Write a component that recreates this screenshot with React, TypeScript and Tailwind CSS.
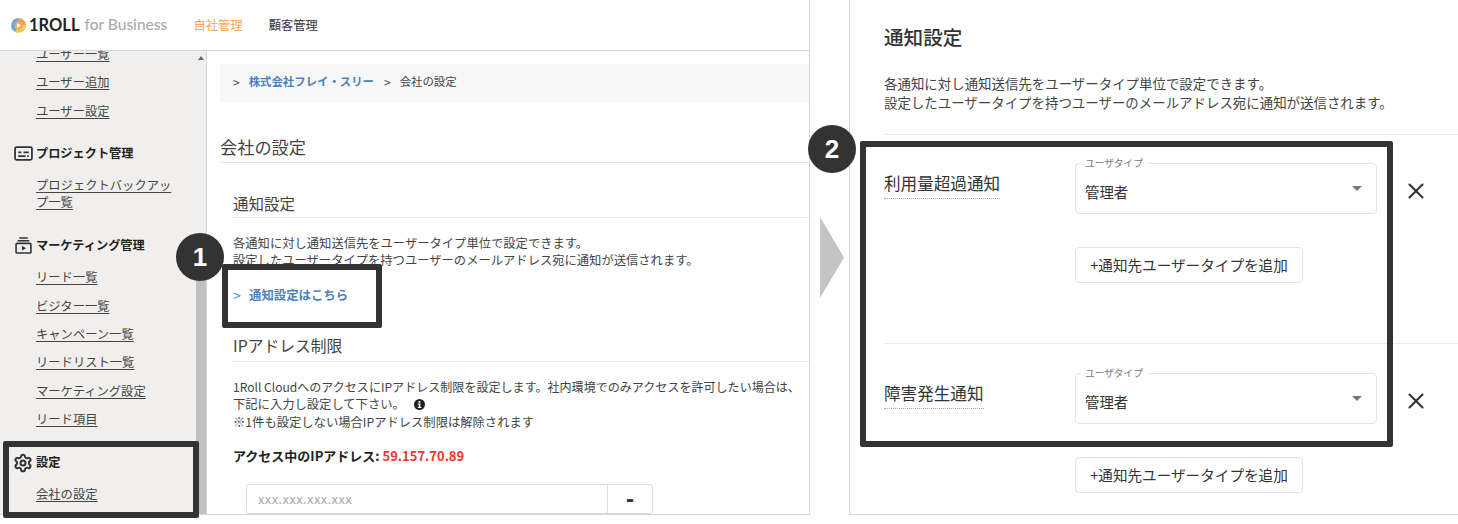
import { Settings, X } from "lucide-react";

const FONT = "font-['Noto_Sans_CJK_JP','Noto_Sans',sans-serif]";

function SideLink({ children }: { children: React.ReactNode }) {
  return (
    <div className="flex h-[28.4px] items-center pl-[36px] text-[12.3px] text-[#444]">
      <span className="underline underline-offset-[2px]">{children}</span>
    </div>
  );
}

function SideHead({ icon, label, className }: { icon: React.ReactNode; label: string; className: string }) {
  return (
    <div className={`flex h-[28px] items-center text-[12.2px] font-bold text-[#222] ${className}`}>
      <span className="flex w-[36px] justify-center pl-[10px]">{icon}</span>
      <span>{label}</span>
    </div>
  );
}

function ProjectIcon() {
  return (
    <svg width="19" height="15" viewBox="0 0 18 14" fill="none" stroke="#333" strokeWidth="1.7">
      <rect x="1" y="1" width="16" height="12" rx="1.5" />
      <path d="M4 6h3M9 6h5M4 9.5h7M12.5 9.5h1.5" />
    </svg>
  );
}

function MarketingIcon() {
  return (
    <svg width="17" height="17" viewBox="0 0 16 16" fill="none" stroke="#333" strokeWidth="1.5">
      <path d="M4 1h8M2.5 3.5h11" />
      <rect x="1" y="6" width="14" height="9" rx="1" />
      <path d="M6.5 8.2v4.6l4-2.3z" fill="#333" stroke="none" />
    </svg>
  );
}

function Logo() {
  return (
    <svg width="15" height="15" viewBox="0 0 30 30">
      <path d="M15 0A15 15 0 0 1 30 15H22A7 7 0 0 0 15 8z" fill="#f0a04b" />
      <path d="M30 15A15 15 0 0 1 8 28L12 21A7 7 0 0 0 22 15z" fill="#ecc85e" />
      <path d="M8 28A15 15 0 0 1 15 0V8A7 7 0 0 0 12 21z" fill="#6fa6d6" />
      <circle cx="15" cy="15" r="8" fill="#f2a85a" />
      <path d="M12 10l8 5-8 5z" fill="#fff" />
    </svg>
  );
}

function Sidebar() {
  return (
    <aside className="flex w-[207px] shrink-0 overflow-hidden border-r border-[#d6d6d6] bg-[#f0efed]">
      <div className="mt-[-11px] w-[196px] shrink-0">
        <SideLink>ユーザー一覧</SideLink>
        <SideLink>ユーザー追加</SideLink>
        <SideLink>ユーザー設定</SideLink>
        <SideHead icon={<ProjectIcon />} label="プロジェクト管理" className="mt-[14px]" />
        <div className="mt-[10px] pl-[36px] pr-[22px] text-[12.3px] leading-[17px] text-[#444] underline underline-offset-[2px]">
          プロジェクトバックアップ一覧
        </div>
        <SideHead icon={<MarketingIcon />} label="マーケティング管理" className="mt-[20px]" />
        <div className="mt-[4px]">
          <SideLink>リード一覧</SideLink>
          <SideLink>ビジター一覧</SideLink>
          <SideLink>キャンペーン一覧</SideLink>
          <SideLink>リードリスト一覧</SideLink>
          <SideLink>マーケティング設定</SideLink>
          <SideLink>リード項目</SideLink>
        </div>
        <SideHead icon={<Settings size={20} strokeWidth={2.4} color="#333" />} label="設定" className="mt-[15px]" />
        <div className="mt-[4px]">
          <SideLink>会社の設定</SideLink>
        </div>
      </div>
      <div className="flex w-[10px] flex-col items-center">
        <div className="mt-[5px] h-0 w-0 border-x-[3px] border-b-[4px] border-x-transparent border-b-[#666]" />
        <div className="mt-auto h-[270px] w-full bg-[#c1c1c1]" />
      </div>
    </aside>
  );
}

function SelectBox() {
  return (
    <div className="relative flex h-[51px] w-[302px] items-end rounded-[4px] border border-[#e4e4e4] pb-[11px] pl-[9px] text-[14.4px] text-[#333]">
      <span className="absolute left-[4px] top-[-8px] bg-white px-[5px] text-[9.7px] leading-[14px] text-[#777]">ユーザタイプ</span>
      <span className="leading-[20px]">管理者</span>
      <span className="absolute right-[14px] top-[22px] h-0 w-0 border-x-[5px] border-t-[5px] border-x-transparent border-t-[#777]" />
    </div>
  );
}

function NotifyRow({ label, top, className }: { label: string; top: string; className: string }) {
  return (
    <div className={`flex ${top} ${className}`}>
      <div className="w-[191px] shrink-0">
        <span className="mt-[8px] inline-block border-b border-dotted border-[#aaa] pb-[2px] text-[16.6px] leading-[25px] text-[#333]">
          {label}
        </span>
      </div>
      <div>
        <SelectBox />
        <div className="mt-[33px] flex h-[36px] w-[228px] items-center justify-center rounded-[4px] border border-[#e4e4e4] text-[14.6px] text-[#333]">
          +通知先ユーザータイプを追加
        </div>
      </div>
      <X size={26} strokeWidth={1.9} color="#333" className="ml-[26px] mt-[15px]" />
    </div>
  );
}

export default function App() {
  return (
    <div className={`relative h-[524px] w-[1458px] overflow-hidden bg-white ${FONT}`}>
      <div className="flex">
        {/* Left screen */}
        <div className="flex h-[515px] w-[810px] shrink-0 flex-col border-b border-r border-[#d6d6d6]">
          <header className="flex h-[51px] shrink-0 items-center border-b border-[#d6d6d6] pl-[11px]">
            <Logo />
            <span className="ml-[3px] font-['Lato',sans-serif] text-[16.5px] font-bold text-[#222]">1ROLL</span>
            <span className="ml-[5px] w-[109px] font-['Lato',sans-serif] text-[15.5px] font-medium text-[#aaa]">for Business</span>
            <span className="text-[12.3px] text-[#f4a661]">自社管理</span>
            <span className="ml-[26px] text-[12.3px] text-[#333]">顧客管理</span>
          </header>
          <div className="flex min-h-0 flex-1">
            <Sidebar />
            <main className="min-w-0 flex-1 overflow-hidden pl-[13px] text-[12.3px] text-[#444]">
              <div className="mt-[13px] flex h-[38px] items-center bg-[#f7f7f7] pb-[2px] pl-[13px] text-[11.4px]">
                <span className="text-[12px]">&gt;</span>
                <span className="ml-[9px] font-bold text-[#4a82bd]">株式会社フレイ・スリー</span>
                <span className="ml-[10px] text-[12px]">&gt;</span>
                <span className="ml-[9px]">会社の設定</span>
              </div>
              <h2 className="mt-[32px] border-b border-[#e6e6e6] pb-[2px] text-[17.2px] leading-[26px] text-[#444]">会社の設定</h2>
              <div className="pl-[13px]">
                <h3 className="mt-[28px] border-b border-[#e6e6e6] pb-[2px] text-[15.5px] leading-[24px] text-[#444]">通知設定</h3>
                <p className="mt-[17px] whitespace-nowrap leading-[17px]">
                  各通知に対し通知送信先をユーザータイプ単位で設定できます。
                  <br />
                  設定したユーザータイプを持つユーザーのメールアドレス宛に通知が送信されます。
                </p>
                <div className="mt-[18px] flex items-center text-[12.4px] font-bold leading-[17px] text-[#4a82bd]">
                  <span className="w-[16px] text-[14px] font-normal">&gt;</span>
                  <span>通知設定はこちら</span>
                </div>
                <h3 className="mt-[30px] border-b border-[#e6e6e6] pb-[3px] text-[15.8px] leading-[24px] text-[#444]">IPアドレス制限</h3>
                <p className="mt-[16px] whitespace-nowrap leading-[17.3px]">
                  <span className="text-[12.05px]">1Roll CloudへのアクセスにIPアドレス制限を設定します。社内環境でのみアクセスを許可したい場合は、</span>
                  <br />
                  下記に入力し設定して下さい。
                  <svg className="ml-[9px] inline-block align-[-1px]" width="11" height="11" viewBox="0 0 11 11">
                    <circle cx="5.5" cy="5.5" r="5.5" fill="#222" />
                    <rect x="4.6" y="2" width="1.8" height="1.7" fill="#fff" />
                    <path d="M3.8 4.6h2.6v3.3h1v1H3.8v-1h1V5.6h-1z" fill="#fff" />
                  </svg>
                  <br />
                  ※1件も設定しない場合IPアドレス制限は解除されます
                </p>
                <div className="mt-[16px] text-[13px] font-bold leading-[17px] text-[#222]">
                  アクセス中のIPアドレス: <span className="text-[#f33535]">59.157.70.89</span>
                </div>
                <div className="ml-[13px] mt-[20px] flex h-[30px] w-[407px] rounded-[3px] border border-[#ddd]">
                  <div className="flex flex-1 items-center pl-[11px] text-[13px] tracking-[0.4px] text-[#aaa]">xxx.xxx.xxx.xxx</div>
                  <div className="flex w-[45px] items-center justify-center border-l border-[#ddd] font-['Liberation_Sans',sans-serif] text-[24px] font-bold leading-none text-[#333]">-</div>
                </div>
              </div>
            </main>
          </div>
        </div>

        {/* Arrow between the screens */}
        <div className="flex h-[515px] w-[39px] shrink-0 items-center pl-[10px]">
          <svg width="24" height="81" viewBox="0 0 24 81">
            <path d="M0 0L24 40.5L0 81z" fill="#c4c4c4" />
          </svg>
        </div>

        {/* Right screen */}
        <div className="h-[515px] min-w-0 flex-1 border-b border-l border-[#d6d6d6]">
          <div className="pl-[34px]">
            <h2 className="pt-[23px] text-[19.6px] font-medium leading-[28px] text-[#333]">通知設定</h2>
            <p className="mt-[23px] whitespace-nowrap text-[13.45px] leading-[19px] text-[#444]">
              各通知に対し通知送信先をユーザータイプ単位で設定できます。
              <br />
              設定したユーザータイプを持つユーザーのメールアドレス宛に通知が送信されます。
            </p>
            <div className="mt-[22px] border-t border-[#ebebeb]">
              <NotifyRow label="利用量超過通知" top="pt-[28px]" className="h-[208px]" />
              <div className="border-t border-[#ebebeb]">
                <NotifyRow label="障害発生通知" top="pt-[29px]" className="" />
              </div>
            </div>
          </div>
        </div>
      </div>

      {/* Annotations laid over the screens */}
      <div className="absolute left-[3px] top-[441px] h-[77px] w-[196px] rounded-[2px] border-[6px] border-[#333]" />
      <div className="absolute left-[222px] top-[264px] h-[64px] w-[160px] rounded-[2px] border-[6px] border-[#333]" />
      <div className="absolute left-[860px] top-[141px] h-[306px] w-[533px] rounded-[2px] border-[6px] border-[#333]" />
      <div className="absolute left-[176px] top-[233px] flex h-[48px] w-[48px] items-center justify-center rounded-full bg-[#333] font-['Liberation_Sans',sans-serif] text-[26px] font-bold text-white">1</div>
      <div className="absolute left-[808px] top-[125px] flex h-[48px] w-[48px] items-center justify-center rounded-full bg-[#333] font-['Liberation_Sans',sans-serif] text-[26px] font-bold text-white">2</div>
    </div>
  );
}
